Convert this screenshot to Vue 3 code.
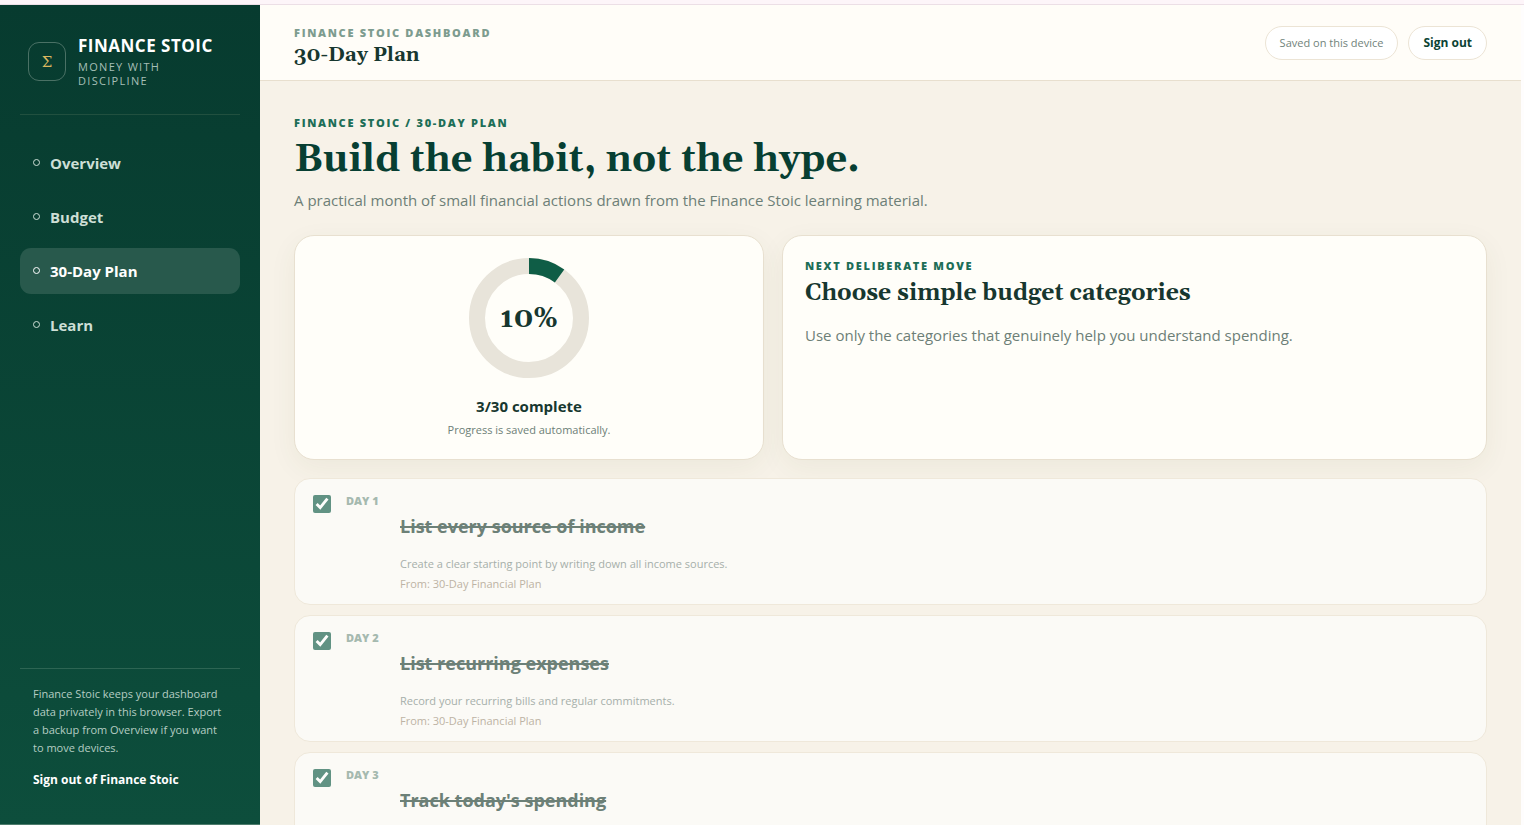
<script setup>
import { ref, computed } from 'vue'

const navItems = ['Overview', 'Budget', '30-Day Plan', 'Learn']
const active = ref('30-Day Plan')
const total = 30
const days = ref([
  {
    n: 1,
    title: 'List every source of income',
    text: 'Create a clear starting point by writing down all income sources.',
    source: 'From: 30-Day Financial Plan',
    done: true
  },
  {
    n: 2,
    title: 'List recurring expenses',
    text: 'Record your recurring bills and regular commitments.',
    source: 'From: 30-Day Financial Plan',
    done: true
  },
  { n: 3, title: "Track today's spending", done: true }
])
const completed = computed(() => days.value.filter((d) => d.done).length)
const percent = computed(() => Math.round((completed.value / total) * 100))
</script>

<template>
  <div class="window">
    <div class="shell">
      <aside class="sidebar">
        <div class="brand">
          <span class="mark">Σ</span>
          <div>
            <strong class="brand-name">FINANCE STOIC</strong>
            <span class="brand-tag">MONEY WITH DISCIPLINE</span>
          </div>
        </div>
        <nav class="nav" aria-label="Main">
          <button
            v-for="item in navItems"
            :key="item"
            type="button"
            class="nav-item"
            :class="{ active: item === active }"
            @click="active = item"
          >
            <span class="ring"></span>{{ item }}
          </button>
        </nav>
        <div class="side-foot">
          <p>Finance Stoic keeps your dashboard data privately in this browser. Export a backup from Overview if you want to move devices.</p>
          <a href="#signout">Sign out of Finance Stoic</a>
        </div>
      </aside>

      <div class="main">
        <header class="topbar">
          <div class="heading">
            <div class="eyebrow muted">FINANCE STOIC DASHBOARD</div>
            <div class="page-name">30-Day Plan</div>
          </div>
          <div class="actions">
            <span class="pill">Saved on this device</span>
            <button type="button" class="pill strong">Sign out</button>
          </div>
        </header>

        <main class="content">
          <div class="eyebrow">FINANCE STOIC / 30-DAY PLAN</div>
          <h1>Build the habit, not the hype.</h1>
          <p class="lead">A practical month of small financial actions drawn from the Finance Stoic learning material.</p>

          <section class="summary">
            <article class="card progress">
              <svg class="donut" viewBox="0 0 120 120" role="img" aria-label="Plan progress">
                <circle cx="60" cy="60" r="52" class="track" />
                <circle
                  cx="60"
                  cy="60"
                  r="52"
                  class="value"
                  pathLength="100"
                  :stroke-dasharray="`${percent} 100`"
                  transform="rotate(-90 60 60)"
                />
                <text x="60" y="69" text-anchor="middle">{{ percent }}%</text>
              </svg>
              <strong>{{ completed }}/{{ total }} complete</strong>
              <small>Progress is saved automatically.</small>
            </article>
            <article class="card next">
              <div class="eyebrow">NEXT DELIBERATE MOVE</div>
              <h2>Choose simple budget categories</h2>
              <p>Use only the categories that genuinely help you understand spending.</p>
            </article>
          </section>

          <section class="days">
            <article v-for="day in days" :key="day.n" class="day">
              <input :id="`day-${day.n}`" v-model="day.done" type="checkbox" />
              <label :for="`day-${day.n}`" class="day-no">DAY {{ day.n }}</label>
              <div class="day-body">
                <h3 :class="{ done: day.done }">{{ day.title }}</h3>
                <p v-if="day.text">{{ day.text }}</p>
                <small v-if="day.source">{{ day.source }}</small>
              </div>
            </article>
          </section>
        </main>
      </div>
    </div>
  </div>
</template>

<style>
body {
  margin: 0;
  background: #fefdfd;
}
</style>

<style scoped>
* {
  box-sizing: border-box;
}
.window {
  height: 100vh;
  padding-right: 3px;
  overflow: hidden;
  display: flex;
  flex-direction: column;
  font-family: "Open Sans", "Noto Sans", sans-serif;
  color: #17372f;
}
.window::before {
  content: "";
  flex: none;
  height: 4px;
  margin-right: -3px;
  background: #fdf5f9;
  border-bottom: 1px solid #ecdfe6;
}
.shell {
  flex: 1;
  min-height: 0;
  display: grid;
  grid-template-columns: 260px minmax(0, 1fr);
}
button {
  font: inherit;
  cursor: pointer;
}
.sidebar {
  display: flex;
  flex-direction: column;
  padding: 26px 20px 35px;
  background: linear-gradient(180deg, #073b2f, #0d4e3c);
  border-bottom: 1px solid #4d7c6c;
}
.brand {
  display: flex;
  align-items: center;
  gap: 12px;
  padding: 4px 8px 26px;
  border-bottom: 1px solid #21503f;
}
.mark {
  flex: none;
  width: 38px;
  height: 39px;
  display: grid;
  place-items: center;
  border: 1px solid #4a7165;
  border-radius: 11px;
  color: #d9b75f;
  font-family: "DejaVu Serif", serif;
  font-size: 15px;
}
.brand-name {
  display: block;
  color: #fff;
  font-size: 17px;
  line-height: 22px;
  letter-spacing: 0.5px;
  white-space: nowrap;
}
.brand-tag {
  display: block;
  margin-top: 3px;
  color: #a5bfb6;
  font-size: 11px;
  line-height: 14px;
  letter-spacing: 1.3px;
}
.nav {
  display: grid;
  gap: 8px;
  margin-top: 25px;
}
.nav-item {
  display: flex;
  align-items: center;
  height: 46px;
  padding: 0 13px;
  gap: 10px;
  border: 0;
  border-radius: 11px;
  background: transparent;
  color: #cddfd6;
  font-size: 15px;
  font-weight: 700;
  text-align: left;
}
.nav-item.active {
  background: #28594c;
  color: #fff;
}
.ring {
  width: 7px;
  height: 7px;
  margin-bottom: 2px;
  border: 1px solid currentColor;
  border-radius: 50%;
}
.side-foot {
  margin-top: auto;
  padding: 16px 13px 0;
  border-top: 1px solid #2d6553;
  font-size: 12px;
  line-height: 18px;
  color: #b5cdc3;
}
.side-foot p {
  margin: 0 0 14px;
  font-size: 11px;
}
.side-foot a {
  display: block;
  color: #fff;
  font-weight: 700;
  text-decoration: none;
}
.main {
  display: flex;
  flex-direction: column;
  min-height: 0;
  background: #f7f2e8;
}
.topbar {
  flex: none;
  display: flex;
  justify-content: space-between;
  align-items: center;
  height: 76px;
  padding: 0 34px;
  background: #fffdf8;
  border-bottom: 1px solid #e8dfce;
}
.heading {
  padding-top: 8px;
}
.eyebrow {
  color: #1d6e57;
  font-size: 11px;
  font-weight: 800;
  line-height: 16px;
  letter-spacing: 1.7px;
}
.eyebrow.muted {
  color: #7d9c8f;
}
.page-name,
h1,
h2 {
  font-family: Gelasio, Georgia, serif;
  font-weight: 700;
}
.page-name {
  font-size: 20px;
  line-height: 28px;
}
.actions {
  display: flex;
  gap: 10px;
}
.pill {
  display: flex;
  align-items: center;
  height: 34px;
  padding: 0 14px;
  border: 1px solid #ece4d5;
  border-radius: 17px;
  background: #fff;
  color: #71837b;
  font-size: 11px;
}
.pill.strong {
  color: #0b4334;
  font-size: 12px;
  font-weight: 700;
}
.content {
  flex: 1;
  min-height: 0;
  overflow: hidden;
  padding: 34px 34px 0;
}
h1 {
  margin: 5px 0 0;
  color: #073f32;
  font-size: 38px;
  line-height: 48px;
}
.lead {
  margin: 5px 0 24px;
  color: #6d7f77;
  font-size: 15px;
  line-height: 22px;
}
.summary {
  display: grid;
  grid-template-columns: 2fr 3fr;
  gap: 18px;
}
.card {
  min-height: 225px;
  padding: 22px 22px 18px;
  border: 1px solid #e8e0d0;
  border-radius: 20px;
  background: #fffef9;
  box-shadow: 0 8px 28px rgba(60, 80, 40, 0.06);
}
.progress {
  display: flex;
  flex-direction: column;
  align-items: center;
}
.donut {
  width: 120px;
  height: 120px;
}
.donut circle {
  fill: none;
  stroke-width: 16;
}
.donut .track {
  stroke: #e8e4da;
}
.donut .value {
  stroke: #0f5d46;
}
.donut text {
  fill: #17372f;
  font-family: Gelasio, Georgia, serif;
  font-size: 28px;
  font-weight: 700;
}
.progress strong {
  margin-top: 16px;
  font-size: 15px;
  line-height: 24px;
}
.progress small {
  margin-top: 3px;
  color: #6d7f77;
  font-size: 11px;
  line-height: 18px;
}
h2 {
  margin: 5px 0 0;
  font-size: 23px;
  line-height: 30px;
}
.next p {
  margin: 15px 0 0;
  color: #6d7f77;
  font-size: 15px;
  line-height: 22px;
}
.days {
  display: grid;
  gap: 10px;
  margin-top: 18px;
}
.day {
  display: grid;
  grid-template-columns: 18px 39px minmax(0, 1fr);
  gap: 15px;
  min-height: 127px;
  padding: 16px 18px 0;
  border: 1px solid #efe8da;
  border-radius: 16px;
  background: #fbfaf6;
}
.day input {
  width: 18px;
  height: 18px;
  margin: 0;
  accent-color: #0f5c46;
  opacity: 0.65;
}
.day-no {
  color: #a5b9af;
  font-size: 11px;
  font-weight: 800;
  line-height: 12px;
  white-space: nowrap;
}
.day h3 {
  margin: 18px 0 0;
  color: #6c8077;
  font-size: 18px;
  line-height: 26px;
}
.day h3.done {
  text-decoration: line-through;
  text-decoration-thickness: 2px;
}
.day p {
  margin: 16px 0 0;
  color: #a6afaa;
  font-size: 11px;
  line-height: 18px;
}
.day small {
  display: block;
  margin-top: 3px;
  color: #bdb3a4;
  font-size: 11px;
  line-height: 16px;
}
</style>
